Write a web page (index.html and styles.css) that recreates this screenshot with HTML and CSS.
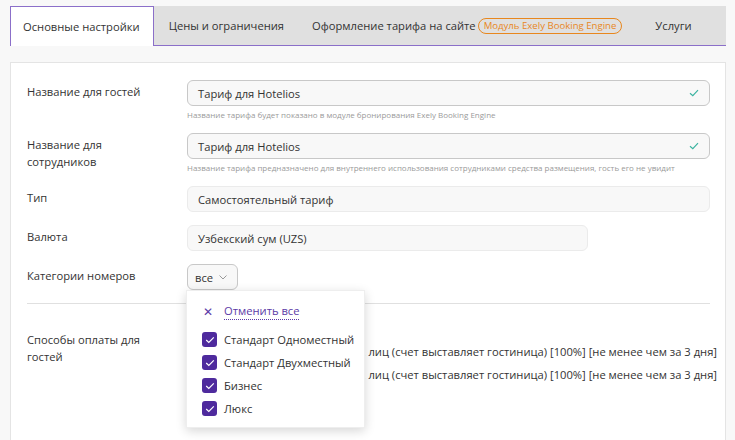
FILE: index.html
```html
<!DOCTYPE html>
<html lang="ru">
<head>
  <meta charset="UTF-8" />
  <title>Тариф</title>
  <link rel="stylesheet" href="styles.css">
</head>
<body>

<div class="tabs">
  <div class="tab active">Основные настройки</div>
  <div class="tab">Цены и ограничения</div>
  <div class="tab">Оформление тарифа на сайте <span class="badge">Модуль Exely Booking Engine</span></div>
  <div class="tab last">Услуги</div>
</div>

<div class="panel">
  <div class="row">
    <div class="label">Название для гостей</div>
    <div class="field">
      <div class="input valid">Тариф для Hotelios
        <svg class="tick" width="10" height="8" viewBox="0 0 10 8"><path d="M1 4.2 L3.8 6.6 L9 1.2" fill="none" stroke="#3bb3a0" stroke-width="1.2"/></svg>
      </div>
      <div class="hint">Название тарифа будет показано в модуле бронирования Exely Booking Engine</div>
    </div>
  </div>

  <div class="row">
    <div class="label">Название для сотрудников</div>
    <div class="field">
      <div class="input valid">Тариф для Hotelios
        <svg class="tick" width="10" height="8" viewBox="0 0 10 8"><path d="M1 4.2 L3.8 6.6 L9 1.2" fill="none" stroke="#3bb3a0" stroke-width="1.2"/></svg>
      </div>
      <div class="hint">Название тарифа предназначено для внутреннего использования сотрудниками средства размещения, гость его не увидит</div>
    </div>
  </div>

  <div class="row">
    <div class="label">Тип</div>
    <div class="field">
      <div class="input">Самостоятельный тариф</div>
    </div>
  </div>

  <div class="row">
    <div class="label">Валюта</div>
    <div class="field">
      <div class="input short">Узбекский сум (UZS)</div>
    </div>
  </div>

  <div class="row">
    <div class="label">Категории номеров</div>
    <div class="field select-wrap">
      <div class="select">все
        <svg width="8" height="5" viewBox="0 0 8 5"><path d="M0.5 0.5 L4 4 L7.5 0.5" fill="none" stroke="#999" stroke-width="1"/></svg>
      </div>
      <div class="dropdown">
        <div class="clear"><span class="x">✕</span><span class="clear-link">Отменить все</span></div>
        <label class="option"><span class="check"><svg width="10" height="8" viewBox="0 0 10 8"><path d="M1.2 4 L3.8 6.4 L8.8 1.4" fill="none" stroke="#fff" stroke-width="1.2"/></svg></span>Стандарт Одноместный</label>
        <label class="option"><span class="check"><svg width="10" height="8" viewBox="0 0 10 8"><path d="M1.2 4 L3.8 6.4 L8.8 1.4" fill="none" stroke="#fff" stroke-width="1.2"/></svg></span>Стандарт Двухместный</label>
        <label class="option"><span class="check"><svg width="10" height="8" viewBox="0 0 10 8"><path d="M1.2 4 L3.8 6.4 L8.8 1.4" fill="none" stroke="#fff" stroke-width="1.2"/></svg></span>Бизнес</label>
        <label class="option"><span class="check"><svg width="10" height="8" viewBox="0 0 10 8"><path d="M1.2 4 L3.8 6.4 L8.8 1.4" fill="none" stroke="#fff" stroke-width="1.2"/></svg></span>Люкс</label>
      </div>
    </div>
  </div>

  <hr class="sep">

  <div class="row pay">
    <div class="label">Способы оплаты для гостей</div>
    <div class="field pay-list">
      <div class="pay-line"><span>Банковский перевод для юр. лиц (счет выставляет гостиница) [100%] [не менее чем за 3 дня]</span></div>
      <div class="pay-line"><span>Банковский перевод для физ. лиц (счет выставляет гостиница) [100%] [не менее чем за 3 дня]</span></div>
    </div>
  </div>
</div>

</body>
</html>
```

FILE: styles.css
```css
body {
  margin: 0;
  padding: 6px 9px 0 10px;
  background: #f8f8f8;
  font-family: "Open Sans", sans-serif;
  color: #333;
  height: 440px;
  box-sizing: border-box;
  overflow: hidden;
}

.tabs {
  display: flex;
  background: #e0e0e0;
  border-bottom: 1px solid #8b6fc9;
  height: 39px;
}

.tab {
  display: flex;
  align-items: center;
  padding: 0 14px;
  font-size: 11.2px;
  color: #333;
  white-space: nowrap;
}

.tab:nth-child(2) {
  padding-left: 15px;
}

.tab.active {
  background: #fff;
  border: 1px solid #8b6fc9;
  border-bottom: none;
  padding: 0 13px 0 12px;
  box-sizing: border-box;
  margin-bottom: -1px;
  height: 40px;
}

.tab.last {
  padding-left: 19px;
}

.badge {
  margin-left: 2px;
  padding: 0 5px;
  border: 1px solid #e8871e;
  border-radius: 8px;
  color: #e8871e;
  font-size: 9.6px;
  line-height: 14px;
}

.panel {
  margin-top: 16px;
  background: #fff;
  border: 1px solid #e4e4e4;
  border-bottom: none;
  padding: 17px 15px 0 16px;
  height: 378px;
  box-sizing: border-box;
}

.row {
  display: flex;
  margin-bottom: 13px;
}

.label {
  width: 160px;
  flex: none;
  font-size: 11.2px;
  line-height: 17px;
  padding-top: 3px;
  padding-right: 30px;
  box-sizing: border-box;
}

.field {
  flex: 1;
  min-width: 0;
}

.input {
  display: flex;
  align-items: center;
  justify-content: space-between;
  height: 26px;
  box-sizing: border-box;
  padding: 0 10px;
  background: #f8f8f8;
  border: 1px solid #ebebeb;
  border-radius: 6px;
  font-size: 11.2px;
}

.input.valid {
  border-color: #c8c8c8;
}

.input.short {
  width: 401px;
}

.hint {
  margin-top: 3px;
  font-size: 8px;
  color: #9a9a9a;
  line-height: 11px;
  white-space: nowrap;
}

.select-wrap {
  position: relative;
}

.select {
  display: inline-flex;
  align-items: center;
  gap: 6px;
  height: 26px;
  box-sizing: border-box;
  padding: 0 10px 0 7px;
  border: 1px solid #c8c8c8;
  border-radius: 6px;
  background: #f8f8f8;
  font-size: 11.2px;
}

.dropdown {
  position: absolute;
  left: -1px;
  top: 26px;
  width: 179px;
  height: 138px;
  box-sizing: border-box;
  background: #fff;
  border: 1px solid #eee;
  box-shadow: 0 3px 10px rgba(0, 0, 0, 0.16);
  padding: 12px 0 0 15px;
  z-index: 2;
}

.clear {
  display: flex;
  align-items: center;
  font-size: 11.2px;
  color: #5b3aa6;
  margin-bottom: 8px;
}

.x {
  font-size: 12px;
  width: 21px;
  padding-left: 1px;
}

.clear-link {
  border-bottom: 1px dotted #5b3aa6;
  line-height: 16px;
}

.option {
  display: flex;
  align-items: center;
  gap: 7px;
  font-size: 11.2px;
  height: 23px;
  color: #333;
}

.check {
  width: 15px;
  height: 15px;
  border-radius: 3px;
  background: #4e2a9d;
  display: flex;
  align-items: center;
  justify-content: center;
}

.sep {
  border: none;
  border-top: 1px solid #e0e0e0;
  margin: 4px 0 0;
}

.pay {
  margin-top: 24px;
}

.pay-list {
  padding-top: 15px;
  font-size: 11.2px;
  margin-right: -7px;
  overflow: hidden;
}

.pay-line {
  display: flex;
  justify-content: flex-end;
  height: 23px;
  line-height: 17px;
  white-space: nowrap;
}

.pay-line span {
  flex: none;
}
```
